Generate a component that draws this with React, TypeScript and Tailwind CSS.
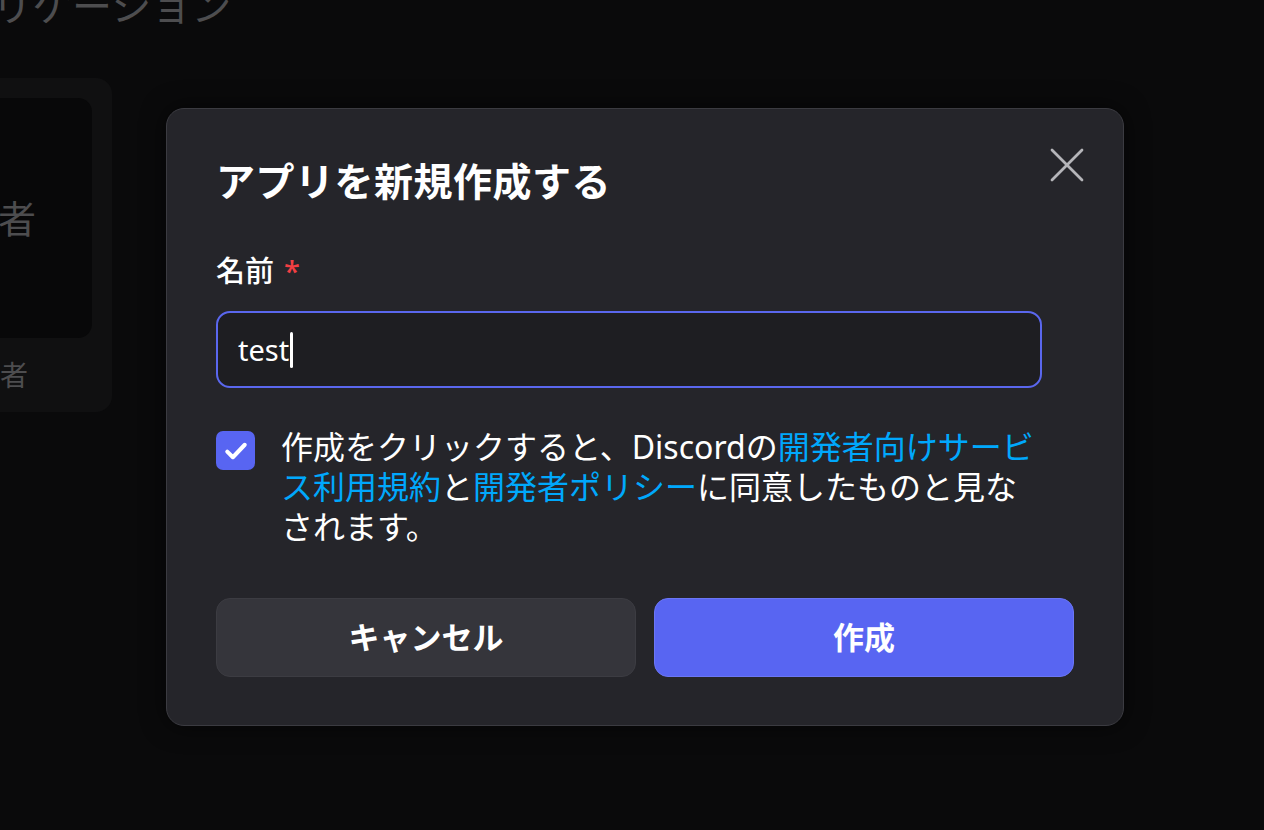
import React, { useState } from 'react';
import { X } from 'lucide-react';

const FONT = { fontFamily: '"Noto Sans", "Noto Sans CJK JP", sans-serif' };

// Dimmed page behind the modal
const BackgroundPage: React.FC = () => (
  <div className="flex flex-col">
    <h1 className="-mt-[18px] -ml-[88px] text-[40px] leading-[48px] text-[#4d4d4f] whitespace-nowrap">アプリケーション</h1>
    <div className="mt-[48px] -ml-[40px] w-[152px] h-[334px] rounded-[16px] bg-[#101011] pt-[20px] pl-[20px] flex flex-col">
      <div className="w-[112px] h-[240px] rounded-[14px] bg-[#080809] flex items-center">
        <span className="-ml-[58px] text-[38px] text-[#4d4d4f] whitespace-nowrap">開発者</span>
      </div>
      <span className="mt-[16px] -ml-[36px] text-[28px] text-[#4d4d4f] whitespace-nowrap">開発者</span>
    </div>
  </div>
);

const CreateAppModal: React.FC = () => {
  const [agreed, setAgreed] = useState(true);

  return (
    <div className="w-[958px] rounded-[18px] border border-[#3b3b41] bg-[#25252a] px-[49px] pt-[48px] pb-[48px] shadow-[0_0_24px_rgba(0,0,0,0.6)]">
      <div className="flex items-start justify-between">
        <h2 className="text-[39px] leading-[48px] font-bold text-white tracking-[0.5px]">アプリを新規作成する</h2>
        <button className="-mt-[22px] -mr-[23px] text-[#b5b5b9]" aria-label="閉じる">
          <X size={60} strokeWidth={1.1} />
        </button>
      </div>

      <div className="pr-[32px]">
        <label className="mt-[48px] flex items-center text-[29px] leading-[36px] font-medium text-white">
          名前
          <span className="ml-[10px] text-[#f23f43]">*</span>
        </label>
        <div className="mt-[22px] h-[77px] rounded-[14px] border-2 border-[#5a67ee] bg-[#1e1e22] px-[20px] flex items-center text-[29px] text-white">
          <span>test</span>
          <span className="ml-[1px] w-[3px] h-[36px] rounded-full bg-white" />
        </div>

        <div className="mt-[39px] flex items-start gap-[26px]">
          <button
            onClick={() => setAgreed(!agreed)}
            className="mt-[4px] w-[39px] h-[39px] shrink-0 rounded-[7px] bg-[#5865f2] flex items-center justify-center"
            aria-label="同意"
          >
            {agreed && (
              <svg width="30" height="30" viewBox="0 0 24 24" fill="none">
                <path d="M5 12.5l4.5 4.5L19 7" stroke="white" strokeWidth="3.2" strokeLinecap="round" strokeLinejoin="round" />
              </svg>
            )}
          </button>
          <p className="flex-1 text-[32px] leading-[40px] text-white">
            作成をクリックすると、Discordの<span className="text-[#00a8fc]">開発者向けサービス利用規約</span>と
            <span className="text-[#00a8fc]">開発者ポリシー</span>に同意したものと見なされます。
          </p>
        </div>
      </div>

      <div className="mt-[51px] grid grid-cols-2 gap-[18px]">
        <button className="h-[79px] rounded-[14px] border border-[#3c3c42] bg-[#35353b] text-[31px] font-semibold text-white">
          キャンセル
        </button>
        <button className="h-[79px] rounded-[14px] border border-[#6b76f5] bg-[#5865f2] text-[31px] font-semibold text-white">
          作成
        </button>
      </div>
    </div>
  );
};

export default function App() {
  return (
    <div className="relative h-screen w-full overflow-hidden bg-[#0a0a0b]" style={FONT}>
      <BackgroundPage />
      <div className="absolute inset-0 flex items-start justify-center pt-[108px] pl-[26px]">
        <CreateAppModal />
      </div>
    </div>
  );
}
